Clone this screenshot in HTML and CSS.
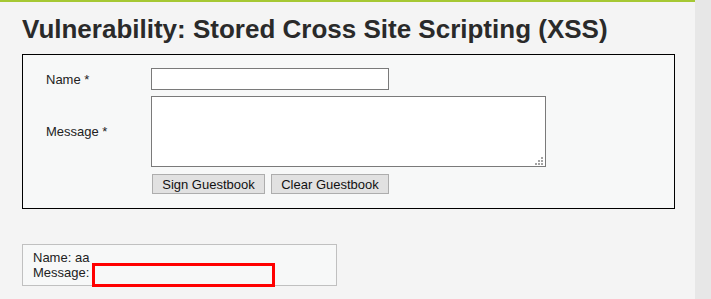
FILE: index.html
```html
<!doctype html>
<html>
<head>
<meta charset="UTF-8">
<title>Vulnerability: Stored Cross Site Scripting (XSS)</title>
<link rel="stylesheet" href="styles.css">
</head>
<body>
<div class="page">
	<div class="main">
		<h1>Vulnerability: Stored Cross Site Scripting (XSS)</h1>
		<form class="guestform" name="guestform">
			<div class="row">
				<label class="lbl lbl_name">Name *</label>
				<input class="txt_name" name="txtName" type="text" maxlength="10">
			</div>
			<div class="row">
				<label class="lbl">Message *</label>
				<textarea class="txt_msg" name="mtxMessage"></textarea>
			</div>
			<div class="row">
				<span></span>
				<div class="btns">
					<input class="btn btn_sign" type="submit" value="Sign Guestbook">
					<input class="btn btn_clear" type="submit" value="Clear Guestbook">
				</div>
			</div>
		</form>
		<div class="comment">
			Name: aa<br>
			Message: <span class="injected"></span>
		</div>
	</div>
	<div class="side"></div>
</div>
</body>
</html>
```

FILE: styles.css
```css
html,body{margin:0;height:100%}
body{
	font-family:"Liberation Sans",Arial,sans-serif;
	font-size:13px;
	color:#222;
	background:#e7e7e7;
}
.page{display:flex;height:100%}
.main{
	width:673px;
	padding-left:22px;
	background:#f4f4f4;
	border-top:2px solid #a6c834;
}
.side{flex:1;background:#e7e7e7}
h1{
	margin:12px 0 10px;
	font-size:26px;
	line-height:30px;
	color:#2a2a2a;
}
.guestform{
	box-sizing:border-box;
	width:653px;
	border:1px solid #000;
	background:#f7f8f8;
	padding:13px 0 14px 23px;
	display:flex;
	flex-direction:column;
	gap:6px;
}
.row{
	display:grid;
	grid-template-columns:105px auto;
	align-items:center;
}
.row:last-child{margin-top:1px}
.lbl{line-height:15px}
.lbl_name{padding-top:1px}
.txt_name,.txt_msg{
	box-sizing:border-box;
	margin:0;
	border:1px solid #7a7a7a;
	border-radius:0;
	background-color:#fff;
	font:13px "Liberation Sans",Arial,sans-serif;
}
.txt_name{width:238px;height:22px}
.txt_msg{
	width:395px;height:71px;display:block;
	resize:none;
	background-image:url("data:image/svg+xml,%3Csvg xmlns='http://www.w3.org/2000/svg' width='9' height='9'%3E%3Cg fill='%23a3a3a3'%3E%3Crect x='7' y='1' width='2' height='2'/%3E%3Crect x='4' y='4' width='2' height='2'/%3E%3Crect x='7' y='4' width='2' height='2'/%3E%3Crect x='1' y='7' width='2' height='2'/%3E%3Crect x='4' y='7' width='2' height='2'/%3E%3Crect x='7' y='7' width='2' height='2'/%3E%3C/g%3E%3C/svg%3E");
	background-repeat:no-repeat;
	background-position:right 2px bottom 1px;
}
.btns{display:flex;gap:6px;padding-left:1px}
.btn{
	box-sizing:border-box;
	margin:0;
	height:20px;
	padding:0;
	border:1px solid #adadad;
	border-radius:0;
	background:#e1e1e1;
	color:#111;
	font:13px "Liberation Sans",Arial,sans-serif;
}
.btn_sign{width:113px}
.btn_clear{width:118px}
.comment{
	box-sizing:border-box;
	width:315px;
	margin-top:35px;
	padding:5px 10px;
	border:1px solid #c0c0c0;
	background:#f7f8f8;
	line-height:15px;
}
.injected{
	display:inline-block;
	vertical-align:top;
	box-sizing:border-box;
	width:183px;
	height:24px;
	margin:-2px 0 -10px -1px;
	border:3px solid #f00;
}
```
